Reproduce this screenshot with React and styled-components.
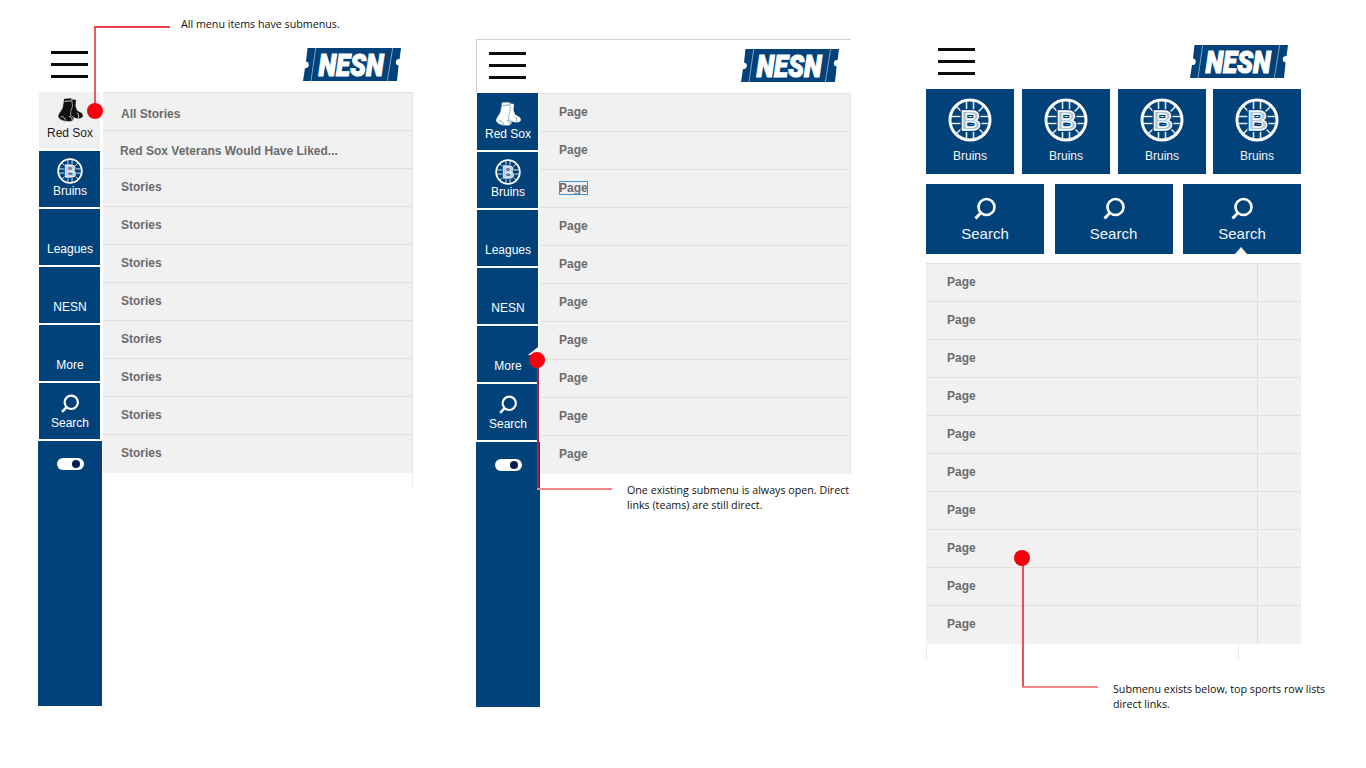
import React from 'react'
import styled, { createGlobalStyle } from 'styled-components'

const NAVY = '#01427a'

const GlobalStyle = createGlobalStyle`
    html, body {
        margin: 0;
        padding: 0;
        background: #fff;
    }
    body {
        font-family: "Liberation Sans", Arial, sans-serif;
    }
`

const Canvas = styled.div`
    position: relative;
    width: 1366px;
    height: 768px;
    overflow: hidden;
    display: flex;
    align-items: flex-start;
    padding-left: 38px;
    box-sizing: border-box;
    background: #fff;
`

const Phone = styled.div`
    width: 375px;
    flex: none;
    margin-top: ${props => props.$top}px;
    margin-left: ${props => props.$left || 0}px;
    ${props => props.$framed && `
        border-top: 1px solid #cfcfcf;
        margin-top: 39px;
    `}
`

const Header = styled.div`
    height: 53px;
    display: flex;
    align-items: flex-start;
    justify-content: space-between;
    box-sizing: border-box;
    padding: ${props => props.$pad || '12px 12px 0 13px'};
    ${props => props.$framed && `border-left: 1px solid #cfcfcf;`}
`

const Burger = styled.div`
    width: 37px;
    display: flex;
    flex-direction: column;
    gap: 9px;
    & span {
        display: block;
        height: 3px;
        background: #0c0c0c;
    }
`

const LogoMark = styled.svg`
    display: block;
    margin-top: -3px;
    overflow: visible;
`

const Body = styled.div`
    display: flex;
    align-items: flex-start;
`

const Nav = styled.div`
    width: 64px;
    flex: none;
    display: flex;
    flex-direction: column;
    gap: 2px;
`

const NavItem = styled.div`
    position: relative;
    height: ${props => props.$tall ? 57 : 56}px;
    margin: 0 2px 0 1px;
    background: ${props => props.$active ? '#f0f0f0' : NAVY};
    color: ${props => props.$active ? '#1c1c1c' : '#fff'};
    font-size: 12px;
    display: flex;
    flex-direction: column;
    align-items: center;
    justify-content: flex-end;
    padding: 0 0 9px 1px;
    box-sizing: border-box;
`

const NavIcon = styled.div`
    margin-bottom: ${props => props.$gap || 0}px;
`

const Notch = styled.span`
    position: absolute;
    right: 0;
    top: 21px;
    width: 0;
    height: 0;
    border-style: solid;
    border-width: 0 0 8px 10px;
    border-color: transparent transparent #fff transparent;
`

const ToggleBlock = styled.div`
    height: ${props => props.$height}px;
    background: ${NAVY};
    padding: 17px 0 0 1px;
    box-sizing: border-box;
    display: flex;
    justify-content: center;
    align-items: flex-start;
`

const Toggle = styled.div`
    width: 27px;
    height: 12px;
    border-radius: 6px;
    background: #fff;
    position: relative;
    &::after {
        content: '';
        position: absolute;
        right: 4px;
        top: 2px;
        width: 8px;
        height: 8px;
        border-radius: 50%;
        background: #0a1a52;
    }
`

const List = styled.div`
    flex: 1;
    margin-left: ${props => props.$gap || 0}px;
`

const Rows = styled.div`
    background: #f1f1f1;
    border-top: 1px solid #e2e2e2;
    border-right: 1px solid #e4e4e4;
    ${props => props.$divider && `
        background-image: linear-gradient(#dedede, #dedede);
        background-size: 1px 100%;
        background-position: 331px 0;
        background-repeat: no-repeat;
        border-right: 0;
    `}
`

const Row = styled.div`
    height: 38px;
    box-sizing: border-box;
    display: flex;
    align-items: center;
    padding-left: ${props => props.$indent}px;
    padding-top: ${props => props.$shift || 0}px;
    padding-bottom: ${props => props.$shift ? 0 : 2}px;
    font-size: 12px;
    font-weight: bold;
    color: #6b6b6b;
    border-bottom: 1px solid #e0e0e0;
    &:last-child {
        border-bottom: 0;
    }
    & span {
        line-height: 14px;
        ${props => props.$selected && `
            outline: 1px solid #3f94d1;
            outline-offset: -1px;
        `}
    }
`

const ListTail = styled.div`
    height: 15px;
    border-right: 1px solid #f0f0f0;
`

const BottomTail = styled.div`
    height: 16px;
    width: 311px;
    border-left: 1px solid #ededed;
    border-right: 1px solid #ededed;
`

const TileRow = styled.div`
    display: flex;
    justify-content: ${props => props.$spread ? 'space-between' : 'flex-start'};
    gap: ${props => props.$spread ? 0 : 8}px;
    margin-bottom: ${props => props.$after}px;
`

const TeamTile = styled.div`
    width: 88px;
    height: 85px;
    background: ${NAVY};
    color: #f2f6fa;
    font-size: 12px;
    display: flex;
    flex-direction: column;
    align-items: center;
    padding-top: 9px;
    box-sizing: border-box;
    &:last-child {
        margin-left: -1px;
    }
    & div {
        margin-top: 7px;
    }
`

const SearchTile = styled.div`
    position: relative;
    width: 118px;
    height: 70px;
    background: ${NAVY};
    color: #f2f6fa;
    font-size: 15px;
    display: flex;
    flex-direction: column;
    align-items: center;
    padding-top: 13px;
    box-sizing: border-box;
    ${props => props.$open && `
        &::after {
            content: '';
            position: absolute;
            bottom: 0;
            left: 52px;
            border-style: solid;
            border-width: 0 6px 7px 6px;
            border-color: transparent transparent #fff transparent;
        }
    `}
    & div {
        margin-top: 4px;
    }
`

// annotations sit over the mockups, their place on the board is the content
const Dot = styled.div`
    position: absolute;
    left: ${props => props.$x - 8}px;
    top: ${props => props.$y - 8}px;
    width: 16px;
    height: 16px;
    border-radius: 50%;
    background: #f6000c;
    z-index: 4;
`

const LeaderV = styled.div`
    position: absolute;
    left: ${props => props.$x}px;
    top: ${props => props.$y}px;
    height: ${props => props.$h}px;
    width: 2px;
    background: ${props => props.$color};
    z-index: 3;
`

const LeaderH = styled.div`
    position: absolute;
    left: ${props => props.$x}px;
    top: ${props => props.$y}px;
    width: ${props => props.$w}px;
    height: 2px;
    background: ${props => props.$color};
    z-index: 3;
`

const Note = styled.div`
    position: absolute;
    left: ${props => props.$x}px;
    top: ${props => props.$y}px;
    width: ${props => props.$w}px;
    font-family: "Open Sans", "Noto Sans", sans-serif;
    font-size: 10.7px;
    line-height: 14.5px;
    color: #111;
    z-index: 3;
`

const Logo = () => (
    <LogoMark width="98" height="33" viewBox="0 0 98 33">
        <path
            fill={NAVY}
            d="M4.5 0H98L96.6 11A3.2 3.2 0 0 0 95.6 17.5L94 33H0L2 20A3.2 3.2 0 0 0 3 13.5Z"
        />
        <path d="M12.7 0L8 33" stroke="#9dbad3" strokeWidth="0.8" />
        <path d="M89.7 0L84.3 33" stroke="#9dbad3" strokeWidth="0.8" />
        <text
            x="48"
            y="28"
            textAnchor="middle"
            fontFamily="Roboto, 'Liberation Sans', sans-serif"
            fontWeight="900"
            fontStyle="italic"
            fontSize="32"
            textLength="65"
            lengthAdjust="spacingAndGlyphs"
            fill="#fff"
            stroke="#fff"
            strokeWidth="1.2"
        >NESN</text>
    </LogoMark>
)

const Bruins = ({ size }) => (
    <svg width={size} height={size} viewBox="0 0 44 44" style={{ display: 'block' }}>
        <circle cx="22" cy="22" r="20" fill={NAVY} stroke="#fff" strokeWidth="3" />
        <g stroke="#dfe9f2" strokeWidth="1.6" fill="none">
            <path d="M3 18.5H41M3 25.5H41" />
            <path d="M18.5 3V41M25.5 3V41" />
            <path d="M8 8L36 36M36 8L8 36" />
        </g>
        <text
            x="22.5"
            y="32"
            textAnchor="middle"
            fontFamily="'Liberation Sans', sans-serif"
            fontWeight="bold"
            fontSize="28"
            fill={NAVY}
            stroke={NAVY}
            strokeWidth="4"
        >B</text>
        <text
            x="22.5"
            y="32"
            textAnchor="middle"
            fontFamily="'Liberation Sans', sans-serif"
            fontWeight="bold"
            fontSize="28"
            fill="#a9c4db"
            stroke="#fff"
            strokeWidth="1.3"
        >B</text>
    </svg>
)

const Socks = ({ color, detail }) => (
    <svg width="25" height="24" viewBox="0 0 25 24" style={{ display: 'block' }}>
        <path
            fill={color}
            d="M12 1L18 2L17.5 8L19 12.5L22.5 14.5C25 15.5 25.5 18.5 24 19.5C21.5 21 17.5 20.5 15 19L12 17Z"
        />
        <path
            fill={color}
            stroke={detail}
            strokeWidth="0.6"
            d="M6 0.5L13.5 0L14.5 8L13 12.5L12.5 17L15.5 19.5C16.5 22.5 13.5 24 10 23.5C5.5 23.5 0.5 21.5 0 18.5C0 15.5 3 13.5 4.5 9.5Z"
        />
        <g fill="none" stroke={detail} strokeWidth="0.8">
            <path d="M2.5 19C5 18 7 20 7.5 22.5" />
            <path d="M11 18.5C13 18.5 14.5 20 14 22.5" />
            <path d="M19 14.5C20.5 15.5 21 18 20.5 20" />
            <path d="M6.5 3.5L13.5 2.8" />
        </g>
    </svg>
)

const SearchIcon = ({ size }) => (
    <svg width={size} height={size} viewBox="0 0 24 24" style={{ display: 'block' }} fill="none" stroke="#fff">
        <circle cx="13.5" cy="10" r="8" strokeWidth="2.6" />
        <path d="M7.7 16L2.5 21.5" strokeWidth="3" />
    </svg>
)

const Burgers = () => (
    <Burger><span /><span /><span /></Burger>
)

const SideNav = ({ activeFirst, notchMore, socksGap }) => (
    <Nav>
        <NavItem $tall $active={activeFirst}>
            <NavIcon $gap={socksGap}>
                <Socks color={activeFirst ? '#111' : '#fff'} detail={activeFirst ? '#eee' : '#5d86aa'} />
            </NavIcon>
            Red Sox
        </NavItem>
        <NavItem>
            <NavIcon><Bruins size={26} /></NavIcon>
            Bruins
        </NavItem>
        <NavItem>Leagues</NavItem>
        <NavItem>NESN</NavItem>
        <NavItem>
            {notchMore && <Notch />}
            More
        </NavItem>
        <NavItem>
            <NavIcon $gap={2}><SearchIcon size={20} /></NavIcon>
            Search
        </NavItem>
        <ToggleBlock $height={265}><Toggle /></ToggleBlock>
    </Nav>
)

const firstLabels = ['All Stories', 'Red Sox Veterans Would Have Liked...', ...Array(8).fill('Stories')]
const firstShifts = [4, 2]
const pages = Array(10).fill('Page')

const App = () => (
    <Canvas>
        <GlobalStyle />

        <Phone $top={39}>
            <Header>
                <Burgers />
                <Logo />
            </Header>
            <Body>
                <SideNav activeFirst socksGap={4} />
                <List $gap={1}>
                    <Rows>
                        {firstLabels.map((label, i) => (
                            <Row key={i} $shift={firstShifts[i]} $indent={i === 1 ? 17 : 18}><span>{label}</span></Row>
                        ))}
                    </Rows>
                    <ListTail />
                </List>
            </Body>
        </Phone>

        <Phone $framed $left={63}>
            <Header $framed $pad="12px 12px 0 12px">
                <Burgers />
                <Logo />
            </Header>
            <Body>
                <SideNav notchMore socksGap={1} />
                <List>
                    <Rows>
                        {pages.map((label, i) => (
                            <Row key={i} $indent={19} $selected={i === 2}><span>{label}</span></Row>
                        ))}
                    </Rows>
                </List>
            </Body>
        </Phone>

        <Phone $top={36} $left={75}>
            <Header $pad="12px 13px 0 12px">
                <Burgers />
                <Logo />
            </Header>
            <TileRow $after={10}>
                {[0, 1, 2, 3].map(i => (
                    <TeamTile key={i}>
                        <Bruins size={44} />
                        <div>Bruins</div>
                    </TeamTile>
                ))}
            </TileRow>
            <TileRow $spread $after={9}>
                {[0, 1, 2].map(i => (
                    <SearchTile key={i} $open={i === 2}>
                        <SearchIcon size={24} />
                        <div>Search</div>
                    </SearchTile>
                ))}
            </TileRow>
            <Rows $divider>
                {pages.map((label, i) => (
                    <Row key={i} $indent={21}><span>{label}</span></Row>
                ))}
            </Rows>
            <BottomTail />
        </Phone>

        <LeaderV $x={94} $y={27} $h={83} $color="#ee5a64" />
        <LeaderH $x={94} $y={26} $w={76} $color="#e8434e" />
        <Dot $x={95} $y={111} />
        <Note $x={181} $y={17} $w={200}>All menu items have submenus.</Note>

        <LeaderV $x={537} $y={360} $h={129} $color="#9c2848" />
        <LeaderH $x={537} $y={488} $w={75} $color="#f4858a" />
        <Dot $x={537} $y={360} />
        <Note $x={627} $y={483} $w={240}>One existing submenu is always open. Direct<br />links (teams) are still direct.</Note>

        <LeaderV $x={1022} $y={558} $h={129} $color="#e8505a" />
        <LeaderH $x={1022} $y={686} $w={76} $color="#f4858a" />
        <Dot $x={1022} $y={558} />
        <Note $x={1113} $y={682} $w={240}>Submenu exists below, top sports row lists<br />direct links.</Note>
    </Canvas>
)

export default App
